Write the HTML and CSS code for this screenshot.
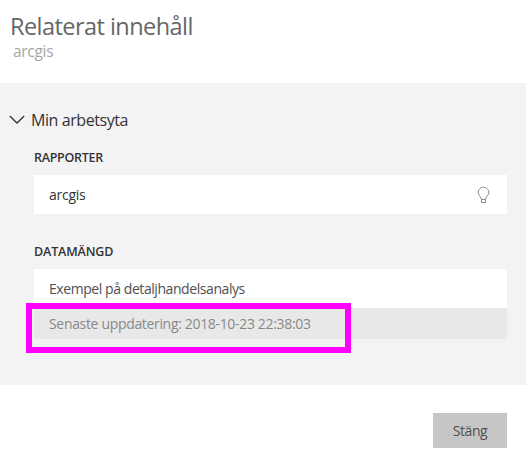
FILE: index.html
```html
<!DOCTYPE html>
<html lang="sv">
<head>
<meta charset="utf-8">
<title>Relaterat innehåll</title>
<link rel="stylesheet" href="styles.css">
</head>
<body>
<header class="header">
  <h1 class="title"><span>Relaterat innehåll</span></h1>
  <p class="subtitle"><span>arcgis</span></p>
</header>
<main class="content">
  <div class="workspace">
    <svg class="chevron" width="18" height="12" viewBox="0 0 18 12"><path d="M1.8 2 L9 9 L16.2 2"/></svg>
    <span class="workspace-name">Min arbetsyta</span>
  </div>
  <section class="group">
    <h2 class="label"><span>RAPPORTER</span></h2>
    <div class="row"><span class="report-name">arcgis</span>
      <svg class="bulb" width="13" height="18" viewBox="0 0 13 18"><path d="M4.5 13.5 C4.5 11 1.2 9.5 1.2 6.5 A5.3 5.3 0 0 1 11.8 6.5 C11.8 9.5 8.5 11 8.5 13.5 V16.5 H4.5 Z M4.5 13.5 H8.5"/></svg>
    </div>
  </section>
  <section class="group">
    <h2 class="label label-dataset"><span>DATAMÄNGD</span></h2>
    <div class="row"><span class="dataset-name">Exempel på detaljhandelsanalys</span></div>
    <div class="refresh"><span class="refresh-text">Senaste uppdatering: 2018-10-23 22:38:03</span><div class="highlight"></div></div>
  </section>
</main>
<footer class="footer"><button class="close"><span>Stäng</span></button></footer>
</body>
</html>
```
FILE: styles.css
```css
* { box-sizing: border-box; }
body {
  margin: 0;
  height: 460px;
  background: #fff;
  font-family: "Open Sans", "Noto Sans", sans-serif;
  color: #333;
  font-size: 14px;
  white-space: nowrap;
}
h1, h2, p { margin: 0; font-weight: 400; }
.header { height: 83px; padding: 9px 10px 0; }
.title { font-size: 23.5px; line-height: 34px; letter-spacing: -0.55px; color: #666; }
.subtitle { padding-left: 3px; margin-top: -1px; font-size: 15.5px; line-height: 18px; letter-spacing: -0.3px; color: #a6a6a6; }
.content { height: 302px; padding: 26px 19px 0 34px; background: #f3f3f3; }
.workspace { display: flex; align-items: center; height: 22px; margin-left: -26px; gap: 5px; font-size: 16px; letter-spacing: -0.42px; }
.chevron { fill: none; stroke: #333; stroke-width: 1.3; }
.group { margin-bottom: 27px; }
.label { height: 44px; padding-top: 17px; font-size: 12.5px; line-height: 20px; font-weight: 600; letter-spacing: -0.28px; }
.label-dataset { height: 28px; padding-top: 1px; letter-spacing: -0.15px; }
.row { display: flex; align-items: center; justify-content: space-between; height: 39px; padding: 0 17px 0 15px; background: #fff; }
.report-name { letter-spacing: -0.25px; }
.dataset-name { color: #505050; letter-spacing: -0.43px; }
.bulb { fill: none; stroke: #8a8a8a; stroke-width: 1; }
.refresh { position: relative; display: flex; align-items: center; height: 31px; padding-left: 15px; background: #e8e8e8; color: #888; }
.refresh-text { letter-spacing: -0.33px; }
.highlight { position: absolute; left: -8px; top: -5px; width: 325px; height: 50px; border: 6px solid #f0f; }
.footer { display: flex; justify-content: flex-end; padding: 28px 19px 0; }
.close { width: 74px; height: 35px; padding: 0; border: 0; background: #c6c6c6; color: #505050; font: 14px "Open Sans", sans-serif; letter-spacing: -0.45px; }
```
